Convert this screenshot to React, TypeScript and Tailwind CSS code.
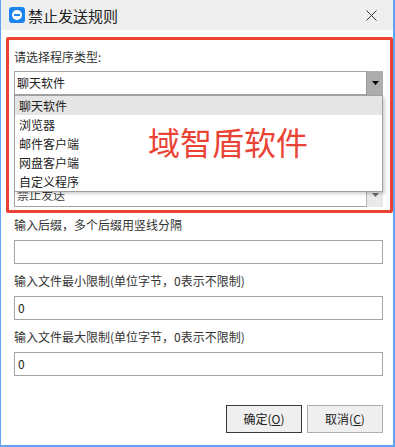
import React from 'react';

const OPTIONS = ['聊天软件', '浏览器', '邮件客户端', '网盘客户端', '自定义程序'];

function Caret({ muted = false }: { muted?: boolean }) {
  return (
    <svg width="7" height="4" viewBox="0 0 7 4">
      <path d="M0 0h7L3.5 4z" fill={muted ? '#6b6b6b' : '#000'} />
    </svg>
  );
}

function TextBox({ value = '' }: { value?: string }) {
  return (
    <div className="h-[24px] border border-[#a3a3a3] flex items-center pl-[3px] text-[12px] text-[#222]">
      {value}
    </div>
  );
}

export default function App() {
  return (
    <div className="w-[395px] h-[447px] bg-white border-l border-r-2 border-b-2 border-[#5ea4f3] flex flex-col overflow-hidden font-['Noto_Sans_CJK_SC','Noto_Sans',sans-serif] text-[#333]">
      {/* Title bar */}
      <div className="h-[30px] shrink-0 bg-[#efefef] flex items-center pl-[8px] pr-[16px]">
        <div className="w-[16px] h-[16px] rounded-[3px] bg-[#1b84f0] flex items-center justify-center">
          <div className="w-[10px] h-[10px] rounded-full bg-white flex items-center justify-center">
            <div className="w-[6px] h-[2px] bg-[#1b84f0]" />
          </div>
        </div>
        <span className="ml-[3px] text-[15px] leading-none text-[#222]">禁止发送规则</span>
        <svg className="ml-auto" width="11" height="11" viewBox="0 0 11 11">
          <path d="M0.5 0.5l10 10M10.5 0.5l-10 10" stroke="#333" strokeWidth="1" />
        </svg>
      </div>

      {/* Body */}
      <div className="relative flex flex-col pt-[7px] pl-[13px] pr-[10px]">
        {/* Highlighted section */}
        <div className="-ml-[8px] -mr-[10px] border-[3px] border-[#ea4335] rounded-[2px] pl-[5px] pr-[7px] pt-[9px] pb-[3px] flex flex-col">
          <div className="text-[12px] leading-[16px]">请选择程序类型:</div>
          <div className="relative mt-[6px] z-10">
            <div className="h-[24px] border border-[#a3a3a3] flex text-[12px] text-[#222]">
              <div className="flex-1 flex items-center pl-[2px]">聊天软件</div>
              <div className="w-[17px] -my-px -mr-px bg-[#adadad] border-l border-[#9a9a9a] flex items-center justify-center">
                <Caret />
              </div>
            </div>
            <div className="absolute top-full left-0 right-0 h-[97px] bg-white border border-[#a0a0a0] shadow-[2px_2px_3px_rgba(0,0,0,0.18)]">
              {OPTIONS.map((o, i) => (
                <div
                  key={o}
                  className={`h-[19px] flex items-center pl-[4px] text-[12px] text-[#222] ${i === 0 ? 'bg-[#e5e5e5]' : ''}`}
                >
                  {o}
                </div>
              ))}
              <div className="absolute left-[133px] top-[29px] text-[32px] leading-[32px] text-[#ea4335] whitespace-nowrap">
                域智盾软件
              </div>
            </div>
          </div>
          <div className="h-[88px]" />
          <div className="h-[24px] border border-[#a3a3a3] flex text-[12px] text-[#444]">
            <div className="flex-1 flex items-center pl-[2px]">禁止发送</div>
            <div className="w-[17px] -my-px -mr-px bg-[#e9e9e9] border-l border-[#b5b5b5] flex items-center justify-center">
              <Caret muted />
            </div>
          </div>
        </div>

        <div className="mt-[4px] text-[12px] leading-[16px]">输入后缀，多个后缀用竖线分隔</div>
        <div className="mt-[7px]"><TextBox /></div>
        <div className="mt-[9px] text-[12px] leading-[16px]">输入文件最小限制(单位字节，0表示不限制)</div>
        <div className="mt-[7px]"><TextBox value="0" /></div>
        <div className="mt-[9px] text-[12px] leading-[16px]">输入文件最大限制(单位字节，0表示不限制)</div>
        <div className="mt-[7px]"><TextBox value="0" /></div>

        <div className="mt-[29px] flex justify-end gap-[5px]">
          <button className="w-[76px] h-[28px] bg-[#efefef] border border-[#3c3c3c] text-[12px] text-[#222]">
            确定(<span className="underline">O</span>)
          </button>
          <button className="w-[76px] h-[28px] bg-[#efefef] border border-[#adadad] text-[12px] text-[#222]">
            取消(<span className="underline">C</span>)
          </button>
        </div>
      </div>
    </div>
  );
}
